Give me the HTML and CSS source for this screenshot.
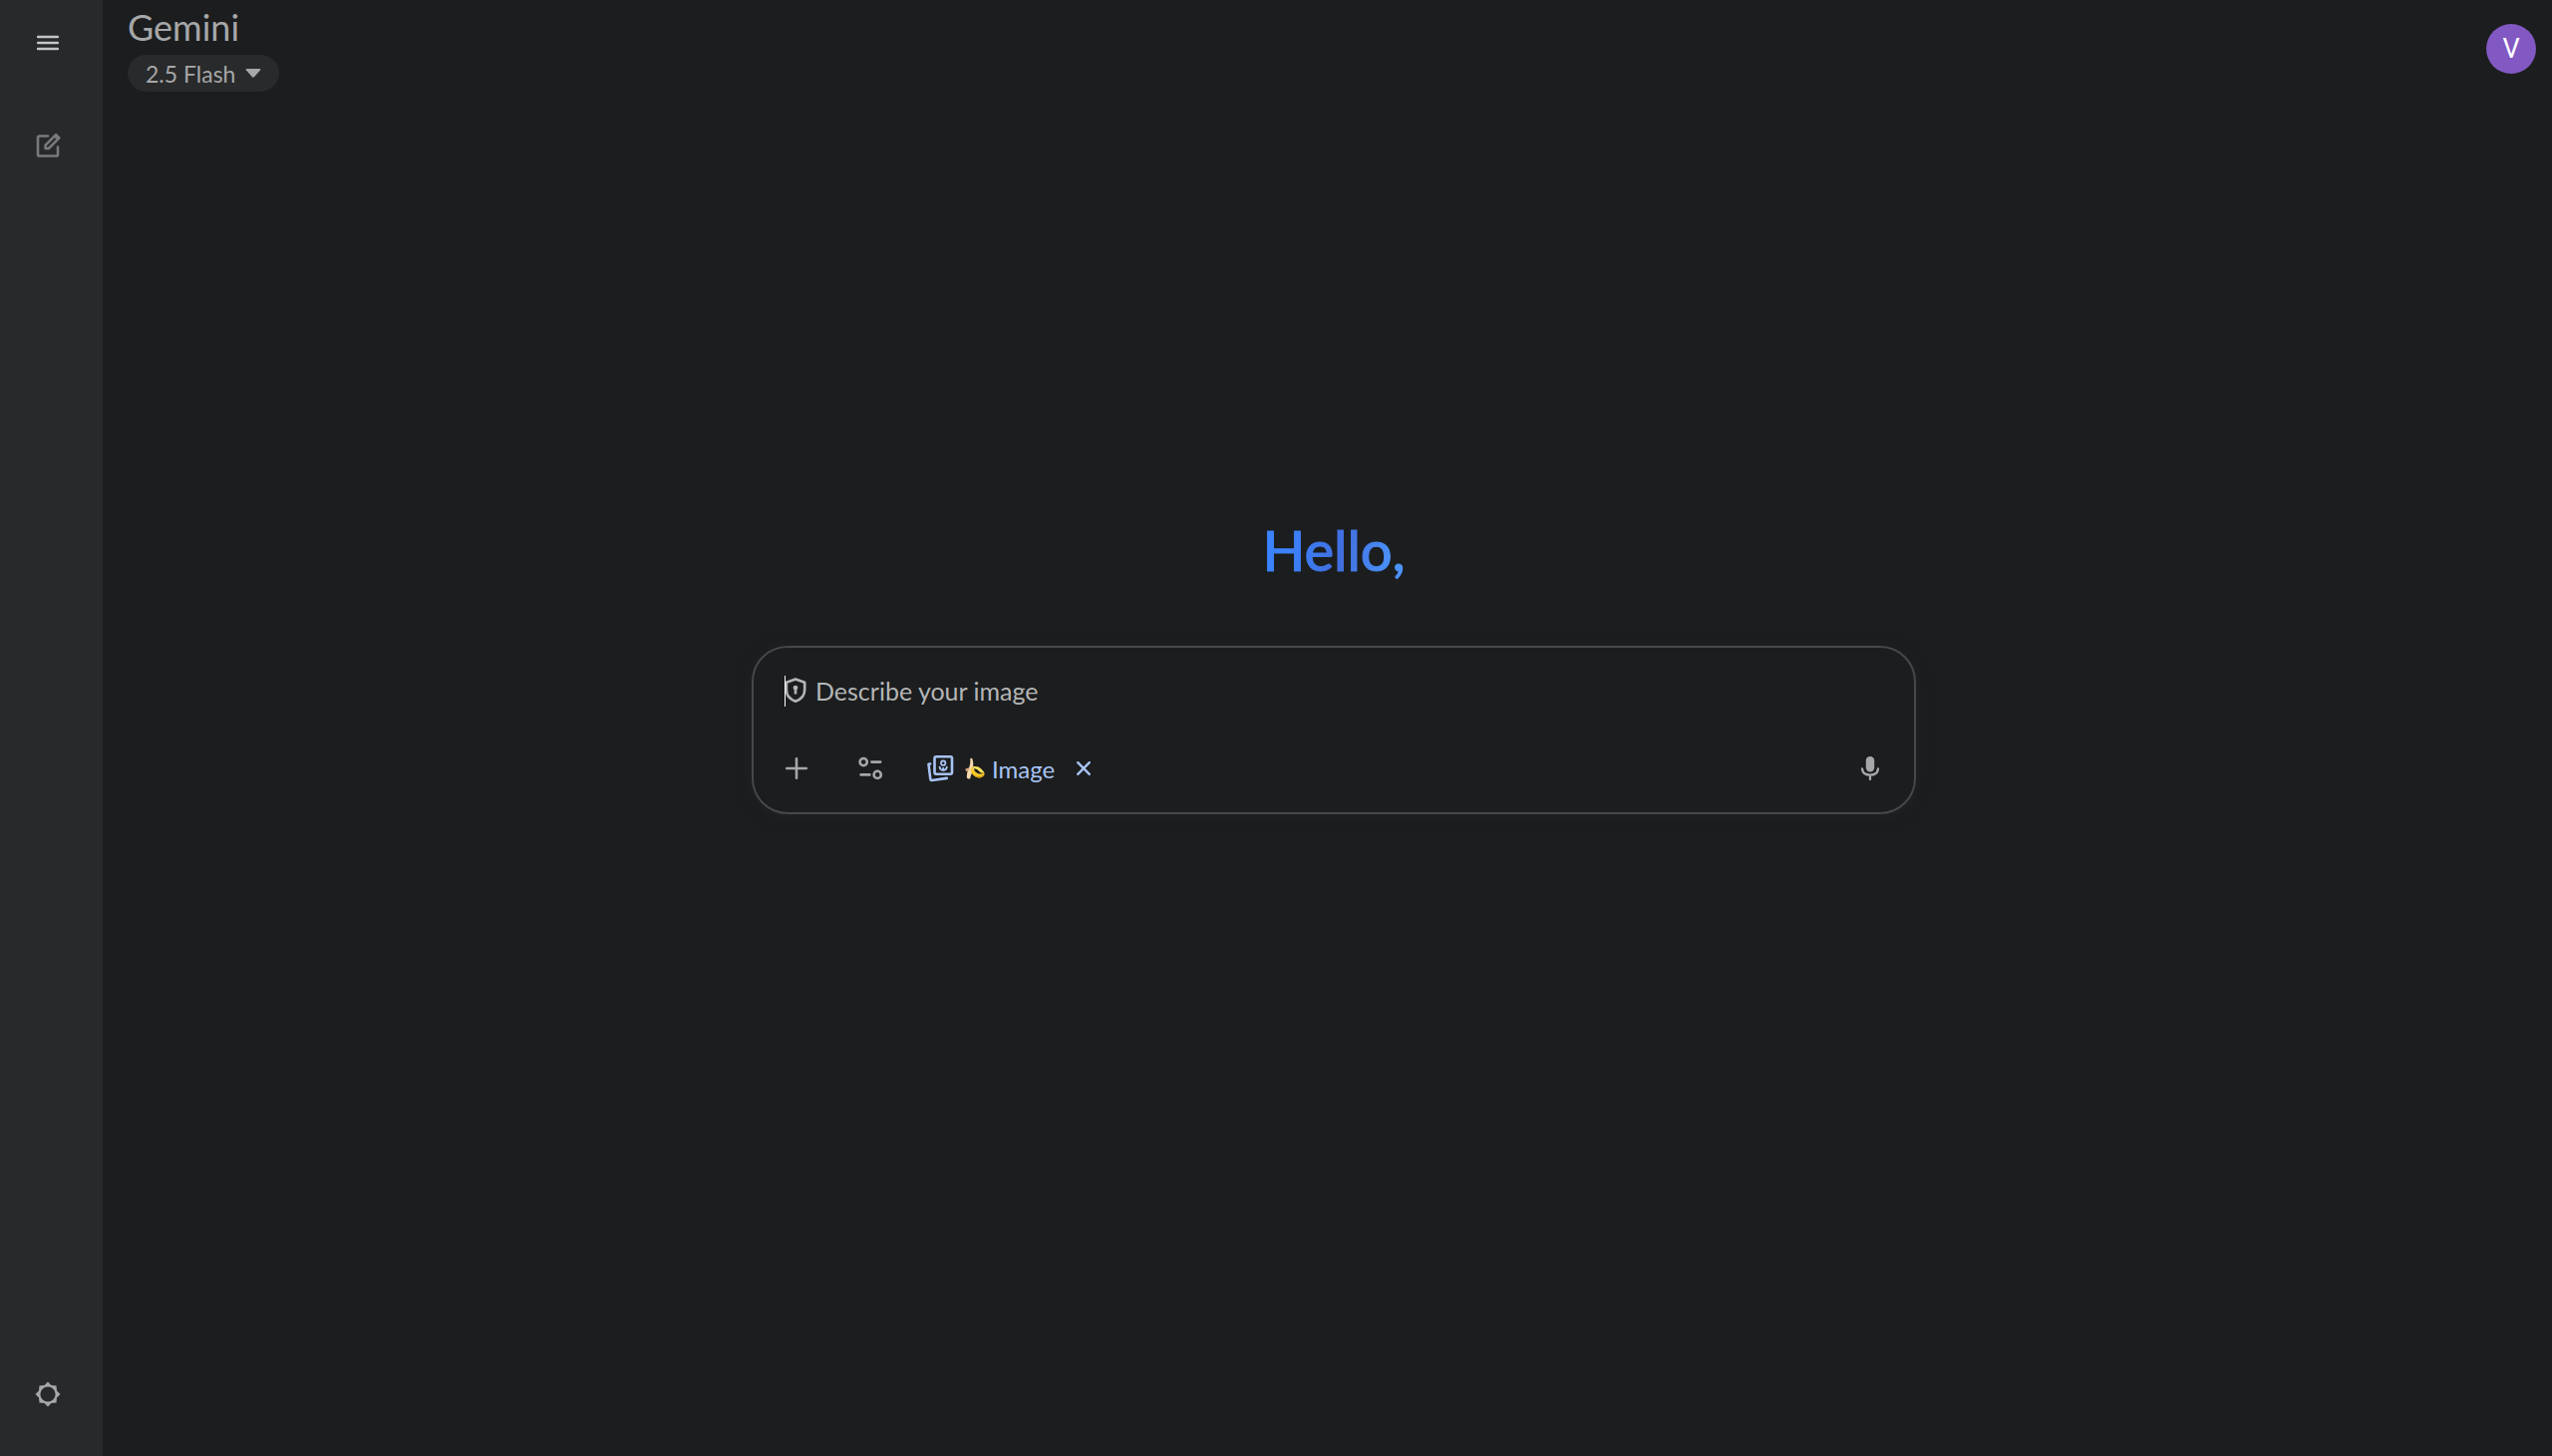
FILE: index.html
```html
<!DOCTYPE html>
<html lang="en">
<head>
  <meta charset="UTF-8" />
  <meta name="viewport" content="width=device-width, initial-scale=1.0" />
  <title>Gemini</title>
  <link rel="stylesheet" href="styles.css">
</head>
<body>

  <!-- Collapsed side navigation -->
  <nav class="sidebar">
    <button class="icon-button menu-button" type="button" aria-label="Main menu">
      <svg width="24" height="24" viewBox="0 0 24 24" fill="none" stroke="currentColor" stroke-width="2.6" stroke-linecap="round">
        <path d="M2.200 6h19.600M2.200 12h19.600M2.200 18h19.600" />
      </svg>
    </button>
    <button class="icon-button new-chat" type="button" aria-label="New chat">
      <svg width="28" height="28" viewBox="0 0 28 28" fill="none" stroke="currentColor" stroke-width="2.6" stroke-linecap="round" stroke-linejoin="round">
        <path d="M14 4.500H5.600Q4 4.500 4 6.100V22.900Q4 24.500 5.600 24.500H22.400Q24 24.500 24 22.900V15.500" />
        <path d="M11.600 17V13.600L22.100 3.100L25.400 6.400L14.900 17Z" />
        <path d="M22.200 4.800L23.800 6.400" stroke-width="4" />
      </svg>
    </button>
    <button class="icon-button settings" type="button" aria-label="Settings">
      <svg width="26" height="26" viewBox="0 0 26 26">
        <path fill="currentColor" fill-rule="evenodd" d="M13 .5L16.400 4L21.500 4.500L22 9.600L25.500 13L22 16.400L21.500 21.500L16.400 22L13 25.500L9.600 22L4.500 21.500L4 16.400L.5 13L4 9.600L4.500 4.500L9.600 4ZM13 5.400A7.600 7.600 0 1 0 13 20.600A7.600 7.600 0 1 0 13 5.400Z" />
      </svg>
    </button>
  </nav>

  <div class="page">
    <header class="topbar">
      <div class="brand">
        <span class="brand-name">Gemini</span>
        <button class="model-picker" type="button">
          2.5 Flash
          <svg width="16" height="9" viewBox="0 0 16 9" fill="currentColor"><path d="M1.500 0H14.500Q16 .2 15 1.500L9 8.300Q8 9.200 7 8.300L1 1.500Q0 .2 1.500 0Z" /></svg>
        </button>
      </div>
      <button class="avatar" type="button" aria-label="Account">V</button>
    </header>

    <main>
      <h1>Hello,</h1>

      <!-- Prompt box -->
      <form class="composer">
        <label class="prompt">
          <span class="caret"></span>
          <svg width="22" height="26" viewBox="0 0 22 26" fill="none" stroke="currentColor" stroke-width="2.600" stroke-linejoin="round">
            <path d="M10 1.500L19.200 4.800V12C19.200 17.500 15.600 21.800 10 23.700C4.500 21.800 .9 17.500 .9 12V4.800Z" />
            <circle cx="10" cy="10.100" r="2.400" fill="currentColor" stroke="none" />
            <path d="M10 10.500V16.500" />
          </svg>
          <input type="text" placeholder="Describe your image" aria-label="Describe your image">
        </label>

        <div class="tools">
          <button class="icon-button" type="button" aria-label="Add files">
            <svg width="24" height="24" viewBox="0 0 24 24" stroke="currentColor" stroke-width="2.600" stroke-linecap="round">
              <path d="M12 2.200V21.800M2.200 12H21.800" />
            </svg>
          </button>
          <button class="icon-button" type="button" aria-label="Tools">
            <svg width="26" height="24" viewBox="0 0 26 24" fill="none" stroke="currentColor" stroke-width="2.600" stroke-linecap="round">
              <circle cx="6.200" cy="5.600" r="3.600" />
              <circle cx="20.200" cy="18.400" r="3.600" />
              <path d="M14.400 5.600H23.200M3.600 18.400H12.400" />
            </svg>
          </button>
          <button class="image-chip" type="button" aria-label="Deselect Image">
            <svg width="28" height="28" viewBox="0 0 28 28" fill="none" stroke="currentColor" stroke-width="2.600" stroke-linecap="round" stroke-linejoin="round">
              <rect x="8.500" y="2.200" width="17.500" height="17.500" rx="1.600" />
              <path d="M4.200 9.500L2.500 9.800L4.300 24.600Q4.500 26.200 6.100 26L20.800 23.900" />
              <g stroke-width="1.800">
                <circle cx="17.200" cy="8.700" r="2.200" />
                <path d="M13.600 12.700Q14 16 17.200 16Q20.500 16 20.800 12.700M17.200 13.700V15.600" />
              </g>
            </svg>
            <svg class="banana" width="20" height="22" viewBox="0 0 20 22">
              <path fill="#f5d9ad" d="M5.200 1.200Q6.600 0 7.400 1.600Q8.600 5 8.200 8.200L9.600 13Q6 15.500 5.300 21.200Q3 22.200 1.900 20.500Q1.400 15.500 4.200 10Q5.800 6 5.200 1.200Z" />
              <path fill="#d8a879" d="M4.200 10.200L.4 11.600Q0 13.500 1.800 14.200L4.600 12.500Z" />
              <path fill="#f7c928" d="M7.600 8.800Q8.200 14.300 13.400 16.300Q16.400 17.200 19.600 15.600Q19.700 19.200 15.600 20.300Q9.800 21 6.500 15.600Q5 12.500 7.600 8.800Z" />
              <path fill="#ffe45c" d="M8.500 9Q13.600 8.500 16.300 11.400Q18.500 13.500 19.500 15.600Q16.700 16.300 14.500 14.200Q12.500 11.300 8.900 11.100Z" />
              <path fill="#d39a12" d="M6.500 14.700Q9 19.500 15.600 18.900Q18.100 18.500 19.600 16.600Q19.200 19.800 15.600 20.400Q9.200 21 6.500 14.700Z" />
            </svg>
            <span>Image</span>
            <svg class="chip-close" width="16" height="16" viewBox="0 0 16 16" stroke="currentColor" stroke-width="2.400" stroke-linecap="round">
              <path d="M2.200 2.200L13.800 13.800M13.800 2.200L2.200 13.800" />
            </svg>
          </button>
          <button class="icon-button mic" type="button" aria-label="Use microphone">
            <svg width="20" height="26" viewBox="0 0 20 26">
              <rect x="5.800" y="1" width="8.400" height="15.500" rx="4.200" fill="currentColor" />
              <path d="M2 13.500C2.500 17.600 5.700 19.700 10 19.700S17.500 17.600 18 13.500M10 20V24" fill="none" stroke="currentColor" stroke-width="2.300" stroke-linecap="round" />
            </svg>
          </button>
        </div>
      </form>
    </main>
  </div>

</body>
</html>
```

FILE: styles.css
```css
/* Global reset and font settings */
* { box-sizing: border-box; }

body {
  display: flex;
  min-height: 100vh;
  margin: 0;
  font-family: Lato, "Open Sans", sans-serif;
  background-color: #1b1d1e;
  color: #a6a7a8;
}

button {
  padding: 0;
  border: none;
  background: none;
  color: inherit;
  font: inherit;
  cursor: pointer;
}

svg { flex: none; }

.icon-button {
  display: flex;
  align-items: center;
  justify-content: center;
  width: 48px;
  height: 48px;
  border-radius: 50%;
}

/* Sidebar */
.sidebar {
  display: flex;
  flex-direction: column;
  flex: none;
  width: 103px;
  padding: 19px 24px 38px;
  background-color: #28292a;
}

.menu-button {
  margin-bottom: 55px;
  color: #c4c5c6;
}

.new-chat { color: #77797a; }
.settings { margin-top: auto; }

/* Page column */
.page {
  display: flex;
  flex-direction: column;
  flex: 1;
  min-width: 0;
}

.topbar {
  display: flex;
  justify-content: space-between;
  align-items: flex-start;
  padding: 7px 16px 0 25px;
}

.brand {
  display: flex;
  flex-direction: column;
  align-items: flex-start;
  gap: 8px;
}

.brand-name {
  font-size: 36px;
  line-height: 40px;
}

.model-picker {
  display: flex;
  align-items: center;
  gap: 10px;
  height: 37px;
  padding: 0 18px;
  border-radius: 20px;
  background-color: #282a2b;
  font-size: 23px;
}

.avatar {
  width: 50px;
  height: 50px;
  margin-top: 17px;
  border-radius: 50%;
  background-color: #8258c2;
  color: #fff;
  font-family: Roboto, sans-serif;
  font-size: 27px;
}

main {
  display: flex;
  flex-direction: column;
  align-items: center;
  gap: 60px;
  padding: 424px 0 0 13px;
}

/* The transparent stroke lets the gradient thicken the letters */
h1 {
  margin: 0;
  background: linear-gradient(100deg, #3b82fb 0%, #3b82fb 20%, #416fe0 55%, #4c94fb 90%);
  background-clip: text;
  -webkit-background-clip: text;
  -webkit-text-stroke: 1px transparent;
  color: transparent;
  font-size: 56px;
  font-weight: 500;
  line-height: 72px;
}

/* Prompt box */
.composer {
  width: 100%;
  max-width: 1168px;
  padding: 26px 20px 20px 19px;
  border: 2px solid #464849;
  border-radius: 36px;
  box-shadow: 0 2px 12px 2px #202223;
}

.prompt {
  display: flex;
  align-items: center;
  height: 34px;
  padding-left: 12px;
  color: #b4b5b6;
}

.caret {
  width: 1px;
  height: 31px;
  background-color: #fff;
}

.prompt input {
  flex: 1;
  margin-left: 8px;
  padding: 0;
  border: none;
  outline: none;
  background: none;
  color: inherit;
  font: inherit;
  font-size: 25px;
}

.prompt input::placeholder {
  color: inherit;
  opacity: 1;
}

.tools {
  display: flex;
  align-items: center;
  gap: 26px;
  margin-top: 37px;
}

.image-chip {
  display: flex;
  align-items: center;
  height: 48px;
  padding: 0 6px;
  color: #a8c3f3;
  font-size: 24px;
}

.banana { margin: 0 7px 0 11px; }
.chip-close { margin-left: 21px; }
.mic { margin-left: auto; }
```
